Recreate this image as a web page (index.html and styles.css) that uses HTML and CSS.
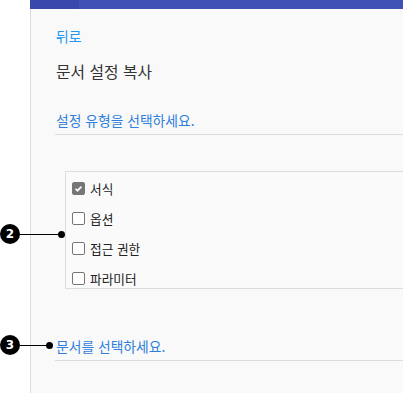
FILE: index.html
```html
<!DOCTYPE html>
<html lang="ko">
<head>
    <meta charset="UTF-8">
    <meta name="viewport" content="width=device-width, initial-scale=1.0">
    <title>문서 설정 복사</title>
    <link rel="stylesheet" href="styles.css">
</head>
<body>
    <div class="painel">
        <div class="barra"><span class="barra-ativa"></span></div>
        <div class="conteudo">
            <a class="voltar" href="#">뒤로</a>
            <h1 class="titulo">문서 설정 복사</h1>
            <div class="campo">설정 유형을 선택하세요.</div>
            <div class="lista">
                <label class="item"><input type="checkbox" checked> 서식</label>
                <label class="item"><input type="checkbox"> 옵션</label>
                <label class="item"><input type="checkbox"> 접근 권한</label>
                <label class="item"><input type="checkbox"> 파라미터</label>
            </div>
            <div class="campo campo-doc">문서를 선택하세요.</div>
        </div>
    </div>

    <div class="marcador marcador-2"><span class="numero">2</span><span class="linha"></span><span class="ponto"></span></div>
    <div class="marcador marcador-3"><span class="numero">3</span><span class="linha"></span><span class="ponto"></span></div>
</body>
</html>
```

FILE: styles.css
```css
body {
    font-family: "Noto Sans CJK KR", "Noto Sans", sans-serif;
    margin: 0;
    background-color: #ffffff;
    height: 393px;
    overflow: hidden;
    position: relative;
}
.painel {
    margin-left: 30px;
    border-left: 1px solid #dddddd;
    background-color: #f9f9f9;
    height: 393px;
}
.barra {
    height: 9px;
    background-color: #3f51b5;
    margin-left: -1px;
    display: flex;
}
.barra-ativa {
    width: 49px;
    background-color: #3949ab;
}
.conteudo {
    padding-left: 24px;
    display: flex;
    flex-direction: column;
    align-items: flex-start;
}
.voltar {
    margin-top: 18px;
    font-size: 13.8px;
    line-height: 18px;
    color: #2196f3;
    text-decoration: none;
    padding-left: 1px;
}
.titulo {
    margin: 17px 0 0 0;
    font-size: 15.8px;
    font-weight: normal;
    line-height: 20px;
    color: #333333;
    padding-left: 1px;
}
.campo {
    align-self: stretch;
    margin-top: 29px;
    font-size: 13.8px;
    line-height: 18px;
    color: #2f80dc;
    padding: 0 0 5px 1px;
    border-bottom: 1px solid #dddddd;
}
.lista {
    align-self: stretch;
    margin: 36px 0 0 10px;
    height: 115px;
    overflow: hidden;
    border: 1px solid #dddddd;
    border-right: none;
    padding-top: 1px;
    box-sizing: content-box;
    background-color: #fafafa;
}
.item {
    display: flex;
    align-items: center;
    gap: 5px;
    height: 30px;
    padding-left: 6px;
    font-size: 12.7px;
    color: #222222;
}
.item input {
    appearance: none;
    margin: 0;
    width: 13px;
    height: 13px;
    border: 1px solid #767676;
    border-radius: 2px;
    background-color: #ffffff;
    box-sizing: border-box;
}
.item input:checked {
    background-color: #767676;
    background-image: url("data:image/svg+xml,%3Csvg xmlns='http://www.w3.org/2000/svg' viewBox='0 0 13 13'%3E%3Cpath d='M3 6.8l2.3 2.3L10 4.3' fill='none' stroke='white' stroke-width='2'/%3E%3C/svg%3E");
}
.campo-doc {
    margin-top: 48px;
}

/* marcadores de anotacao */
.marcador {
    position: absolute;
    left: 0;
    display: flex;
    align-items: center;
}
.marcador-2 { top: 224px; }
.marcador-3 { top: 335px; }
.numero {
    width: 20px;
    height: 20px;
    border-radius: 50%;
    background-color: #000000;
    color: #ffffff;
    font-family: "DejaVu Sans", sans-serif;
    font-weight: bold;
    font-size: 12px;
    line-height: 20px;
    text-align: center;
}
.linha {
    height: 1px;
    background-color: #000000;
}
.marcador-2 .linha { width: 40px; }
.marcador-3 .linha { width: 28px; }
.ponto {
    width: 7px;
    height: 7px;
    border-radius: 50%;
    background-color: #000000;
    margin-left: -2px;
}
```
